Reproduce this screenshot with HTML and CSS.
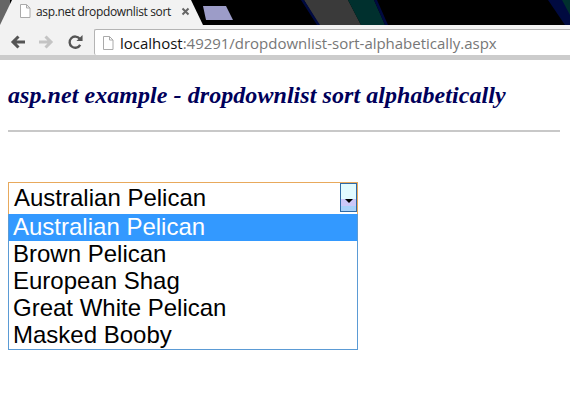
FILE: index.html
```html
<!DOCTYPE html>
<html lang="en">
<head>
    <meta charset="UTF-8">
    <title>asp.net dropdownlist sort alphabetically</title>
    <link rel="stylesheet" href="styles.css">
</head>
<body>
    <!-- Browser tab strip -->
    <div class="tabstrip">
        <div class="tab">
            <svg class="page-icon" width="12" height="14" viewBox="0 0 12 14"><path d="M1.500.5h6l3.500 3.500v9.500h-9.500z M7.500.5v3.500h3.500" fill="#fff" stroke="#aaa"/></svg>
            <span class="tab-title">asp.net dropdownlist sort</span>
            <svg class="tab-close" width="9" height="9" viewBox="0 0 9 9"><path d="M1.500 1.500l6 6M7.500 1.500l-6 6" stroke="#666" stroke-width="2"/></svg>
        </div>
        <div class="new-tab"></div>
        <svg class="wallpaper" width="337" height="25" viewBox="0 0 337 25">
            <path d="M71 0h44l13 25h-42z" fill="#3a3a3a"/>
            <path d="M115 0h26l11 25h-24z" fill="#00302e"/>
            <path d="M141 0h3l11 25h-3zM71 0h-3l16 25h3z" fill="#000a40"/>
            <path d="M315 0h22v25h-5z" fill="#000a40"/>
            <path d="M329 0h8v15z" fill="#00302e"/>
        </svg>
    </div>

    <!-- Toolbar -->
    <div class="toolbar">
        <svg class="nav" width="15" height="14" viewBox="0 0 15 14"><path d="M15 7H3M8.500 1.500L3 7l5.500 5.500" fill="none" stroke="#555" stroke-width="3"/></svg>
        <svg class="nav" width="15" height="14" viewBox="0 0 15 14"><path d="M0 7h12M6.500 1.500L12 7l-5.500 5.500" fill="none" stroke="#c4c4c4" stroke-width="3"/></svg>
        <svg class="nav" width="15" height="15" viewBox="0 0 16 16"><path d="M13 10.500A6 6 0 1 1 12.500 4" fill="none" stroke="#555" stroke-width="2.500"/><path d="M9 6.500h6.500V0z" fill="#555"/></svg>
        <div class="omnibox">
            <svg class="page-icon" width="12" height="14" viewBox="0 0 12 14"><path d="M1.500.5h6l3.500 3.500v9.500h-9.500z M7.500.5v3.500h3.500" fill="#fff" stroke="#aaa"/></svg>
            <span class="url"><span class="host">localhost</span>:49291/dropdownlist-sort-alphabetically.aspx</span>
        </div>
    </div>

    <!-- Page Content Section -->
    <div class="page-content">
        <h2>asp.net example - dropdownlist sort alphabetically</h2>
        <hr>
        <div class="dropdown">
            <div class="dropdown-value">
                <span>Australian Pelican</span>
                <div class="dropdown-btn"><i></i></div>
            </div>
            <ul class="dropdown-list">
                <li class="selected">Australian Pelican</li>
                <li>Brown Pelican</li>
                <li>European Shag</li>
                <li>Great White Pelican</li>
                <li>Masked Booby</li>
            </ul>
        </div>
    </div>
</body>
</html>
```

FILE: styles.css
```css
* {
    box-sizing: border-box;
}

body {
    margin: 0;
    background-color: #fff;
    font-family: "Liberation Sans", sans-serif;
    overflow: hidden;
}

svg {
    display: block;
    flex: none;
}

.tabstrip {
    height: 25px;
    background: linear-gradient(to right, #666 10px, #000 10px);
    display: flex;
    align-items: flex-end;
    overflow: hidden;
}

.tab {
    width: 203px;
    height: 25px;
    background-color: #f2f2f2;
    clip-path: polygon(12px 0, 191px 0, 203px 25px, 0 25px);
    display: flex;
    align-items: center;
    padding: 0 0 3px 19px;
}

.tab-title {
    width: 138px;
    margin-left: 5px;
    font-family: "Open Sans", sans-serif;
    font-size: 12px;
    letter-spacing: -0.35px;
    color: #222;
    white-space: nowrap;
}

.tab-close {
    margin-left: 7px;
}

.new-tab {
    width: 30px;
    height: 14px;
    margin-bottom: 5px;
    background-color: #9c9cc8;
    clip-path: polygon(0 0, 23px 0, 30px 14px, 3px 14px);
}

.toolbar {
    height: 30px;
    background-color: #f2f2f2;
    display: flex;
    align-items: center;
    gap: 14px;
    padding: 4px 0 0 10px;
}

.omnibox {
    flex: 1;
    height: 26px;
    margin-left: -3px;
    background-color: #fff;
    border: 1px solid #b4b4b4;
    border-right: none;
    border-bottom: none;
    border-radius: 2px 0 0 2px;
    display: flex;
    align-items: center;
    padding-left: 7px;
}

.url {
    margin-left: 6px;
    font-family: "Open Sans", sans-serif;
    font-size: 15px;
    letter-spacing: -0.02px;
    color: #777;
    white-space: nowrap;
}

.host {
    color: #111;
}

.page-content {
    border-top: 5px solid #ccc;
    padding: 21px 10px 0 8px;
}

h2 {
    margin: 0;
    font-family: "Liberation Serif", serif;
    font-size: 24px;
    font-style: italic;
    font-weight: bold;
    letter-spacing: 0.06px;
    line-height: 28px;
    color: #00005a;
}

hr {
    height: 2px;
    margin: 21px 0 50px;
    border: none;
    background-color: #c8c8c8;
}

.dropdown {
    width: 350px;
    font-size: 24px;
    color: #000;
}

.dropdown-value {
    height: 32px;
    border: 1px solid #e8a95c;
    border-bottom: none;
    display: flex;
    justify-content: space-between;
    padding-left: 5px;
    line-height: 29px;
}

.dropdown-btn {
    width: 17px;
    height: 29px;
    border: 1px solid #2f6aa5;
    background: linear-gradient(to bottom, #e2fbff 55%, #ccc8f8 55%, #ccc8f8 80%, #a8d2fa 80%);
    display: flex;
    align-items: center;
    justify-content: center;
}

.dropdown-btn i {
    margin-top: 6px;
    border-left: 4px solid transparent;
    border-right: 4px solid transparent;
    border-top: 4px solid #000;
}

.dropdown-list {
    margin: 0;
    padding: 0;
    list-style: none;
    border: 1px solid #5b9bd5;
    border-top: none;
}

.dropdown-list li {
    height: 27px;
    line-height: 26px;
    padding-left: 4px;
}

.dropdown-list .selected {
    background-color: #3399ff;
    color: #fff;
}
```
